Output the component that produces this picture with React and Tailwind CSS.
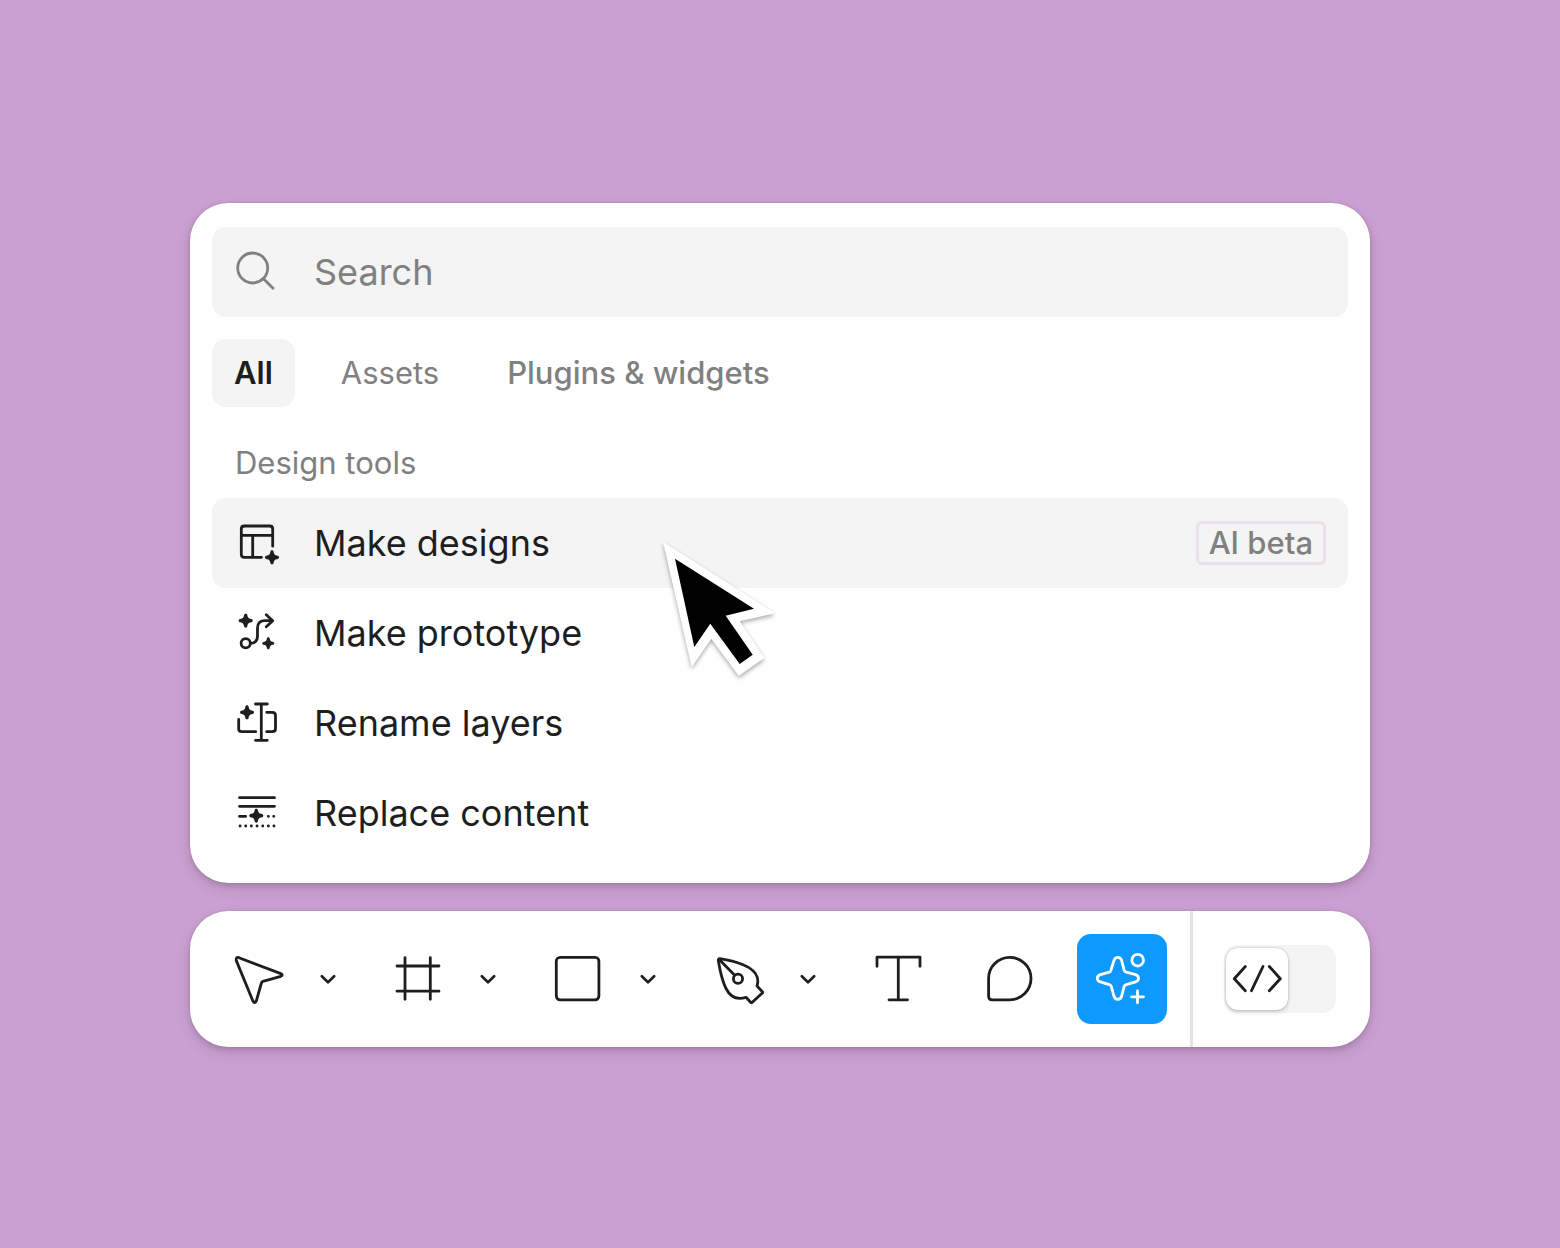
import { useState } from 'react';

const Spark = ({ x, y, r }) => (
  <path
    transform={`translate(${x} ${y}) scale(${r})`}
    d="M0 -1 C.12 -1 .2 -.94 .23 -.8 C.3 -.4 .4 -.3 .8 -.23 C.94 -.2 1 -.12 1 0 C1 .12 .94 .2 .8 .23 C.4 .3 .3 .4 .23 .8 C.2 .94 .12 1 0 1 C-.12 1 -.2 .94 -.23 .8 C-.3 .4 -.4 .3 -.8 .23 C-.94 .2 -1 .12 -1 0 C-1 -.12 -.94 -.2 -.8 -.23 C-.4 -.3 -.3 -.4 -.23 -.8 C-.2 -.94 -.12 -1 0 -1Z"
    fill="currentColor"
    stroke="none"
  />
);

const Icon = ({ children }) => (
  <svg viewBox="0 0 90 90" className="size-[90px] shrink-0" fill="none" stroke="currentColor"
    strokeWidth="2.8" strokeLinecap="round" strokeLinejoin="round" aria-hidden="true">
    {children}
  </svg>
);

const designTools = [
  {
    name: 'Make designs',
    badge: 'AI beta',
    icon: (
      <>
        <path d="M49.5 59.3H32.3Q29.3 59.3 29.3 56.3V31Q29.3 28 32.3 28H57.7Q60.7 28 60.7 31V48.2M29.3 37.3H60.7M40.7 37.3V59.3" />
        <Spark x={60} y={59.3} r={7} />
      </>
    ),
  },
  {
    name: 'Make prototype',
    icon: (
      <>
        <circle cx="33.7" cy="55.3" r="4.6" />
        <path d="M38.5 55.3C43.5 55 45.5 52.5 45.5 48V40C45.5 35 48 32.7 53 32.7H60.7M54.3 26.7L60.7 32.7L54.3 38.7" />
        <Spark x={33.7} y={32.7} r={7} />
        <Spark x={56.3} y={55.3} r={6} />
      </>
    ),
  },
  {
    name: 'Rename layers',
    icon: (
      <>
        <path d="M43.5 26H55.3M43.5 62.3H55.3M49.3 26V62.3M26.7 41.5V50.7Q26.7 53.7 29.7 53.7H43.7M54.7 34.3H60.3Q63.5 34.3 63.5 37.5V50.5Q63.5 53.7 60.3 53.7H54.7" />
        <Spark x={35} y={34.3} r={7} />
      </>
    ),
  },
  {
    name: 'Replace content',
    icon: (
      <>
        <path d="M27.5 29.7H62.5M27.5 38.3H62.5M27.5 48.3H33.7" />
        <path d="M56.3 48.3H56.4M61.7 48.3H61.8M28 58H28.1M33.7 58H33.8M39.3 58H39.4M45 58H45.1M50.7 58H50.8M56.3 58H56.4M61.9 58H62" />
        <Spark x={44.3} y={47.7} r={7} />
      </>
    ),
  },
];

const toolbarTools = [
  {
    name: 'Move',
    menu: true,
    icon: <path d="M27 23.7L68.8 39.6Q71.6 41 68.8 42.3L51 47.3Q49.8 47.7 49.4 49L44.3 67Q42.6 70 40.9 67L24.3 26.6Q23.6 22.6 27 23.7Z" />,
  },
  {
    name: 'Frame',
    menu: true,
    icon: <path d="M33 23.7V65.3M58.3 23.7V65.3M25 32H67M25 57.2H67" />,
  },
  {
    name: 'Rectangle',
    menu: true,
    icon: <rect x="24.3" y="23.3" width="42.6" height="42.6" rx="3.8" />,
  },
  {
    name: 'Pen',
    menu: true,
    icon: (
      <>
        <path d="M28 24.6C37 26 44.5 28 50.5 30.5C62 35 68 42.5 65 52L70.6 58Q70.9 58.4 70.6 58.8L60 68.5Q59.4 69 58.8 68.5L54 63.3C44.5 66.3 38 62.5 34 54.5C30.5 47.5 28 37 26.3 26.5Q26.3 24.4 28 24.6ZM27.5 25.7L42.7 41.3" />
        <circle cx="46" cy="44.7" r="4.6" />
      </>
    ),
  },
  {
    name: 'Text',
    icon: <path d="M24 32.3V23.2H67V32.3M45.3 23.2V65.8M36 65.8H54.5" />,
  },
  {
    name: 'Comment',
    icon: <path d="M23.6 44.6A21.2 21.2 0 1 1 44.8 65.8H27.2Q23.6 65.8 23.6 62.2Z" />,
  },
  {
    name: 'Actions',
    active: true,
    icon: (
      <>
        <path d="M33.9 36.3L37 26.3Q38 23.3 40.8 23.3Q43.6 23.3 44.6 26.3L47.1 36.2Q47.6 37.8 49.2 38.2L58.5 40.7Q61.5 41.7 61.5 44.3Q61.5 47 58.5 47.9L49.2 50.6Q47.6 51.1 47.1 52.7L44.6 62.3Q43.6 65.3 40.8 65.3Q38 65.3 37 62.3L34.4 52.7Q34 51.1 32.4 50.6L23.3 47.9Q20.3 47 20.3 44.3Q20.3 41.7 23.3 40.7L32.4 38.2Q33.5 37.8 33.9 36.3Z" />
        <circle cx="60.7" cy="26.2" r="5.8" />
        <path d="M60.5 56.8V68.8M54.5 62.8H66.5" />
      </>
    ),
  },
];

const tabs = ['All', 'Assets', 'Plugins & widgets'];

const tabStyles = [
  'font-semibold',
  'font-normal',
  'font-medium',
];

const Pointer = () => (
  <svg viewBox="0 0 120 145" aria-hidden="true"
    className="pointer-events-none absolute left-[448px] top-[40px] w-[120px] h-[145px] z-10 overflow-visible drop-shadow-[0_2px_2px_rgba(0,0,0,0.35)]">
    <path d="M3 3.7L115 75.3L79.7 83.3L104.3 120L78.7 138L51.3 100.7L31.7 129.3Z" fill="#fff" />
    <path d="M15 20.7L94 70.7L65.7 77.7L92.7 116.7L79.7 126L50.3 85.7L34.3 109Z" fill="#000" />
  </svg>
);

const App = () => {
  const [search, setSearch] = useState('');
  const [tab, setTab] = useState('All');
  const [devMode, setDevMode] = useState(false);

  return (
    <div className="min-h-screen bg-[#ca9fd1] flex flex-col items-center justify-center gap-7 pt-0.5 text-[#1e1e1e] font-['Inter',sans-serif]">
      {/* Actions panel */}
      <section className="w-full max-w-[1180px] bg-white rounded-[38px] px-[22px] pt-6 pb-[25px] shadow-[0_0_2px_rgba(0,0,0,0.12),0_3px_6px_rgba(0,0,0,0.14),0_6px_16px_rgba(0,0,0,0.08)]">
        <label className="flex items-center bg-[#f4f4f4] rounded-[14px] text-[#808080]">
          <Icon>
            <circle cx="40.7" cy="41" r="15" />
            <path d="M51.3 51.6L61 61.3" />
          </Icon>
          <input type="text" value={search} onChange={(e) => setSearch(e.target.value)}
            aria-label="Search" placeholder="Search"
            className="flex-1 min-w-0 pl-3 bg-transparent text-[36px] leading-[48px] outline-none placeholder:text-[#808080]" />
        </label>

        <div role="tablist" className="flex gap-6 mt-[22px]">
          {tabs.map((t, i) => (
            <button key={t} type="button" role="tab" aria-selected={tab === t} onClick={() => setTab(t)}
              className={`${tabStyles[i]} h-[68px] px-[22px] rounded-[14px] text-[31px] leading-[40px] ${tab === t ? 'bg-[#f4f4f4]' : 'text-[#808080]'}`}>
              {t}
            </button>
          ))}
        </div>

        <h2 className="px-[23px] pt-9 pb-[15px] text-[31px] leading-[40px] text-[#808080]">Design tools</h2>

        <ul>
          {designTools.map((tool) => (
            <li key={tool.name} className="relative">
              <button type="button"
                className={`w-full flex items-center pr-[22px] rounded-[14px] text-left ${tool.badge ? 'bg-[#f4f4f4]' : ''}`}>
                <Icon>{tool.icon}</Icon>
                <span className="pl-3 text-[36px] leading-[48px]">{tool.name}</span>
                {tool.badge && (
                  <span className="ml-auto px-[10px] border-3 border-[#e8e2e8] rounded-md text-[31px] leading-[38px] font-medium text-[#808080]">
                    {tool.badge}
                  </span>
                )}
              </button>
              {tool.badge && <Pointer />}
            </li>
          ))}
        </ul>
      </section>

      {/* Toolbar */}
      <nav aria-label="Toolbar"
        className="w-full max-w-[1180px] h-[136px] flex bg-white rounded-[38px] shadow-[0_0_2px_rgba(0,0,0,0.12),0_3px_6px_rgba(0,0,0,0.14),0_6px_16px_rgba(0,0,0,0.08)]">
        <div className="flex-1 flex items-center justify-between pl-[22px] pr-[23px]">
          {toolbarTools.map((tool) => (
            <div key={tool.name} className="flex items-center gap-1">
              <button type="button" aria-label={tool.name}
                className={`rounded-[14px] ${tool.active ? 'bg-[#0d99ff] text-white' : ''}`}>
                <Icon>{tool.icon}</Icon>
              </button>
              {tool.menu && (
                <button type="button" aria-label={`${tool.name} options`} className="w-11 h-[90px] flex items-center justify-center">
                  <svg viewBox="0 0 20 20" className="size-5" fill="none" stroke="currentColor" strokeWidth="2.6"
                    strokeLinecap="round" strokeLinejoin="round" aria-hidden="true">
                    <path d="M3.8 7.2L10 13.3L16.2 7.2" />
                  </svg>
                </button>
              )}
            </div>
          ))}
        </div>

        <div className="flex items-center border-l-3 border-[#e8e2e8] pl-[31px] pr-[34px]">
          <label className={`flex items-center w-28 h-[68px] px-0.5 rounded-[14px] bg-[#f4f4f4] ${devMode ? 'justify-end' : ''}`}>
            <input type="checkbox" checked={devMode} onChange={(e) => setDevMode(e.target.checked)}
              aria-label="Dev Mode" className="sr-only" />
            <span className="size-[62px] rounded-xl bg-white shadow-[0_0_2px_rgba(80,40,80,0.3),0_2px_4px_rgba(0,0,0,0.16)]">
              <svg viewBox="0 0 62 62" className="size-[62px]" fill="none" stroke="currentColor" strokeWidth="2.8"
                strokeLinecap="round" strokeLinejoin="round" aria-hidden="true">
                <path d="M19.3 18.5L8.3 30.7L19.3 42.7M37 18.5L25.5 42.7M43.3 18.5L54.3 30.7L43.3 42.7" />
              </svg>
            </span>
          </label>
        </div>
      </nav>
    </div>
  );
};

export default App;
